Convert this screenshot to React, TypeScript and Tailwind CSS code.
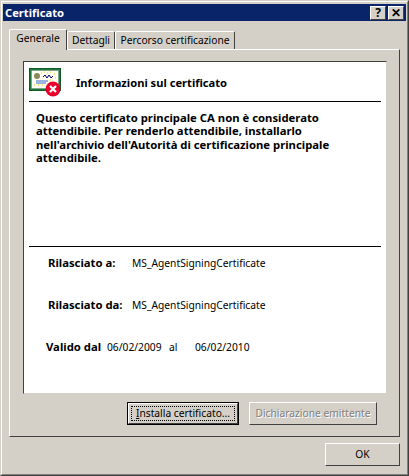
import React from "react";

const face = "bg-[#d4d0c8]";

function CertIcon() {
  return (
    <svg width="34" height="30" viewBox="0 0 34 30" className="block">
      <rect x="0.5" y="0.5" width="31" height="22" fill="#1f7a3a" stroke="#0f5a28" />
      <rect x="2.5" y="2.5" width="27" height="18" fill="#ffffff" stroke="#6f8f78" strokeDasharray="1 1" />
      <rect x="4" y="4" width="24" height="15" fill="#fffef2" />
      <circle cx="8" cy="8" r="3" fill="#8a8a58" />
      <path d="M14 9l2-2 2 3 2-3 2 3 2-2" fill="none" stroke="#000080" strokeWidth="1" />
      <path d="M7 13h12M7 15h10" stroke="#3a6ed0" strokeWidth="1" />
      <path d="M12 5h1M15 4h1M18 5h1M21 4h1M25 6h1M26 10h1M21 12h1M5 17h1M9 17h1M13 17h1" stroke="#e8d000" strokeWidth="1" />
      <circle cx="24" cy="21" r="7.5" fill="#e8002a" />
      <path d="M21 18l6 6M27 18l-6 6" stroke="#ffffff" strokeWidth="2.2" />
    </svg>
  );
}

function CaptionButton({ children }: { children: React.ReactNode }) {
  return (
    <div className="w-4 h-[14px] bg-[#d4d0c8] border border-t-white border-l-white border-r-[#404040] border-b-[#404040] flex items-center justify-center text-[12px] leading-none font-bold text-black">
      {children}
    </div>
  );
}

function Tab({ label, active, width }: { label: string; active?: boolean; width: string }) {
  return (
    <div
      className={
        active
          ? `relative z-10 h-[21px] mt-[1px] -mb-[1px] ${width} ${face} border-t border-l border-r border-t-white border-l-white border-r-[#404040] rounded-t-[2px] flex items-center justify-center pb-[2px] text-black`
          : `h-[18px] mt-[3px] ${width} ${face} border-t border-l border-r border-t-white border-l-white border-r-[#404040] rounded-t-[2px] flex items-center justify-center text-black`
      }
    >
      {label}
    </div>
  );
}

function Button({ label, disabled, focused }: { label: React.ReactNode; disabled?: boolean; focused?: boolean }) {
  if (focused) {
    return (
      <div className="w-[112px] h-[23px] border border-black">
        <div className="w-full h-full border border-t-white border-l-white border-r-[#404040] border-b-[#404040] flex items-center justify-center p-[2px]">
          <div className="w-full h-full border border-dotted border-black flex items-center justify-center text-black">
            {label}
          </div>
        </div>
      </div>
    );
  }
  return (
    <div
      className={`h-[23px] border border-t-white border-l-white border-r-[#404040] border-b-[#404040] flex items-center justify-center ${
        disabled ? "w-[128px] text-[#808080] [text-shadow:1px_1px_0_#ffffff]" : "w-[75px] text-black"
      }`}
    >
      {label}
    </div>
  );
}

export default function App() {
  return (
    <div
      className={`w-[409px] h-[476px] ${face} border border-t-[#d4d0c8] border-l-[#d4d0c8] border-r-[#404040] border-b-[#404040] overflow-hidden text-[10.25px] text-black font-['Noto_Sans',sans-serif]`}
    >
      <div className="h-full border border-t-white border-l-white border-r-[#808080] border-b-[#808080] p-[1px] pt-[2px] flex flex-col">
        {/* title bar */}
        <div className="h-[17px] bg-[#0a246a] flex items-center justify-between pl-[2px] pr-[2px]">
          <span className="text-white font-bold text-[11.2px] leading-none">Certificato</span>
          <div className="flex gap-[2px]">
            <CaptionButton>?</CaptionButton>
            <CaptionButton>✕</CaptionButton>
          </div>
        </div>

        {/* tabs */}
        <div className="flex mt-[7px] ml-[6px] h-[21px]">
          <Tab label="Generale" active width="w-[58px]" />
          <Tab label="Dettagli" width="w-[48px]" />
          <Tab label="Percorso certificazione" width="w-[120px]" />
        </div>

        {/* tab panel */}
        <div className="ml-[6px] mr-[6px] w-[391px] h-[388px] border border-t-white border-l-white border-r-[#404040] border-b-[#404040] flex flex-col pl-[13px] pr-[12px] pt-[11px]">
          <div className="w-[364px] h-[333px] bg-white border border-t-[#404040] border-l-[#404040] border-r-[#d4d0c8] border-b-[#d4d0c8] flex flex-col px-[5px]">
            <div className="h-[40px] flex items-center border-b border-black shrink-0">
              <div className="pt-[2px]"><CertIcon /></div>
              <span className="font-bold text-[11.15px] ml-[13px] mt-[4px]">Informazioni sul certificato</span>
            </div>
            <p className="mt-[9px] ml-[7px] mr-[14px] font-bold text-[11.3px] leading-[13.3px]">
              Questo certificato principale CA non è considerato attendibile. Per renderlo attendibile, installarlo
              nell'archivio dell'Autorità di certificazione principale attendibile.
            </p>
            <div className="flex-1" />
            <div className="border-t border-black h-[147px] shrink-0 flex flex-col">
              <div className="flex ml-[19px] mt-[10px] h-[13px] items-center">
                <span className="font-bold text-[11.3px] w-[84px]">Rilasciato a:</span>
                <span>MS_AgentSigningCertificate</span>
              </div>
              <div className="flex ml-[19px] mt-[29px] h-[13px] items-center">
                <span className="font-bold text-[11.3px] w-[84px]">Rilasciato da:</span>
                <span>MS_AgentSigningCertificate</span>
              </div>
              <div className="flex ml-[17px] mt-[29px] h-[13px] items-center">
                <span className="font-bold text-[11.3px] w-[61px]">Valido dal</span>
                <span className="w-[62px]">06/02/2009</span>
                <span className="w-[26px]">al</span>
                <span>06/02/2010</span>
              </div>
            </div>
          </div>
          <div className="flex justify-end gap-[10px] mt-[8px] pr-[10px]">
            <Button focused label={<span><span className="underline">I</span>nstalla certificato...</span>} />
            <Button disabled label="Dichiarazione emittente" />
          </div>
        </div>

        {/* dialog buttons */}
        <div className="flex justify-end mt-[6px] pr-[6px]">
          <Button label="OK" />
        </div>
      </div>
    </div>
  );
}
